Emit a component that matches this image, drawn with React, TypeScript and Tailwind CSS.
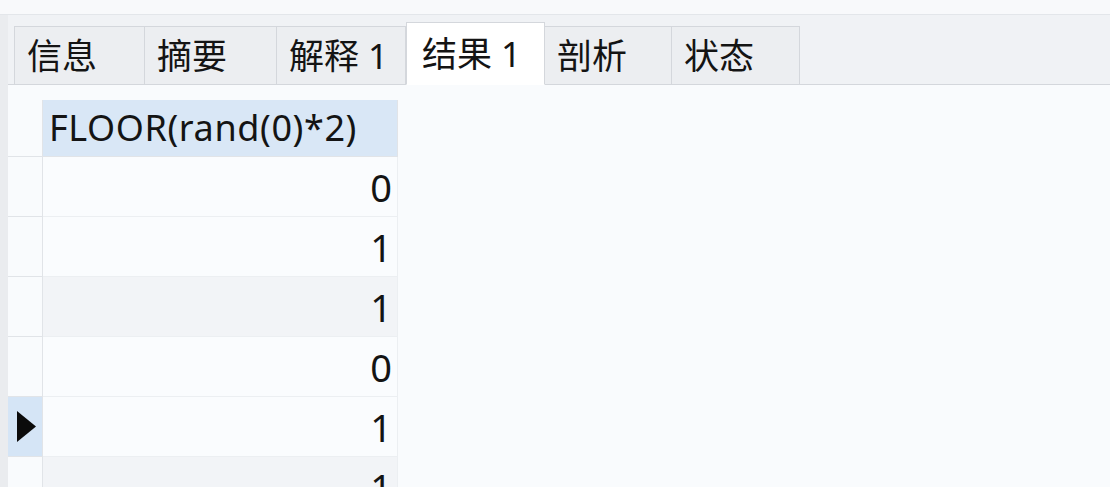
import { useState } from "react";

const TABS = [
  { label: "信息", width: "w-[131px]" },
  { label: "摘要", width: "w-[133px]" },
  { label: "解释 1", width: "w-[130px]" },
  { label: "结果 1", width: "w-[139px]" },
  { label: "剖析", width: "w-[128px]" },
  { label: "状态", width: "w-[129px]" },
];

const ROWS = [0, 1, 1, 0, 1, 1];

function RowPointer() {
  return (
    <svg width="19" height="31" viewBox="0 0 19 31" className="ml-[3px] shrink-0" aria-hidden="true">
      <path d="M0 0 L19 15.5 L0 31 Z" fill="#0b0b0b" />
    </svg>
  );
}

export default function App() {
  const [active, setActive] = useState(3);
  const selected = 4;

  return (
    <div className="flex h-[487px] w-[1110px] flex-col overflow-hidden bg-[#f9fbfd] font-['Noto_Sans','Noto_Sans_CJK_SC',sans-serif] text-[#141414]">
      <div className="h-[15px] shrink-0 border-b border-[#e3e6ea] bg-[#f8f9fb]" />

      <div className="flex min-h-0 flex-1">
        <div className="w-[8px] shrink-0 bg-[#eaecef]" />

        <div className="flex min-w-0 flex-1 flex-col">
          <div className="flex h-[70px] shrink-0 items-end border-b border-[#d4d7dc] bg-[#f0f2f5] pl-[6px]">
            {TABS.map((tab, i) => {
              const isActive = i === active;
              return (
                <button
                  key={tab.label}
                  onClick={() => setActive(i)}
                  className={[
                    "relative -mb-px flex items-center border border-[#d4d7dc] text-left text-[35px] leading-none",
                    tab.width,
                    isActive
                      ? "z-10 h-[63px] border-b-[#ffffff] bg-[#ffffff] pl-[15px]"
                      : "-ml-px h-[59px] bg-[#eceef1] pl-[12px] first:ml-0",
                  ].join(" ")}
                >
                  {tab.label}
                </button>
              );
            })}
          </div>

          <div className="pt-[15px]">
            <div className="grid w-[390px] grid-cols-[35px_355px]">
              <div className="h-[57px] border-b border-r border-[#e1e4e8]" />
              <div className="flex h-[57px] items-center border-b border-r border-[#e1e4e8] bg-[#d9e7f6] pl-[6px] text-[36px] leading-none tracking-[0.6px]">
                FLOOR(rand(0)*2)
              </div>

              {ROWS.map((value, i) => {
                const striped = i === 2 || i === 5;
                const isSelected = i === selected;
                return (
                  <div key={i} className="contents">
                    <div
                      className={[
                        "flex h-[60px] items-center justify-center border-b border-r border-[#e1e4e8]",
                        isSelected ? "bg-[#d5e5f6]" : "bg-[#f9fbfd]",
                      ].join(" ")}
                    >
                      {isSelected && <RowPointer />}
                    </div>
                    <div
                      className={[
                        "flex h-[60px] items-center justify-end border-b border-r border-[#eceff2] pr-[5px] text-[38px] leading-none",
                        striped ? "bg-[#f2f4f7]" : "bg-[#fafcfe]",
                      ].join(" ")}
                    >
                      {value}
                    </div>
                  </div>
                );
              })}
            </div>
          </div>
        </div>
      </div>
    </div>
  );
}
